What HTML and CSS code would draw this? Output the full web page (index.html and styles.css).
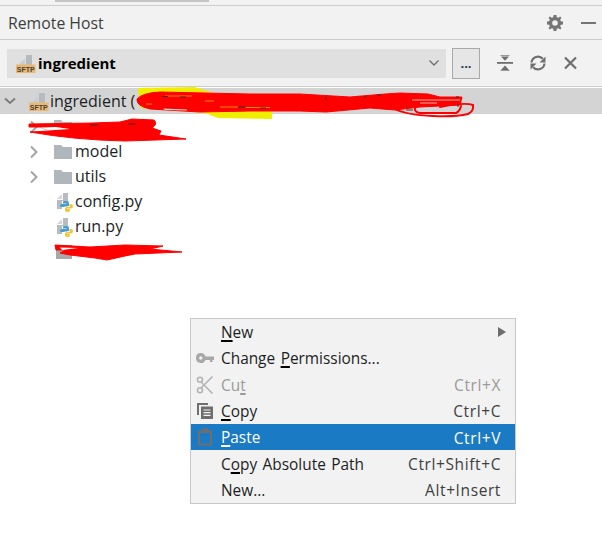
FILE: index.html
```html
<!DOCTYPE html>
<html lang="en">
<head>
<meta charset="utf-8">
<title>Remote Host</title>
<link rel="stylesheet" href="styles.css">
</head>
<body>
<svg width="0" height="0" class="defs">
  <defs>
    <symbol id="sftp" viewBox="0 0 20 20">
      <path d="M3 11 L9 5.500 V11Z" fill="#c9ced1"/>
      <path d="M10 2 H16 V12 H3 V11.500 H10Z" fill="#b4babe"/>
      <rect x="0" y="11.500" width="19.500" height="8.500" fill="#e9b974"/>
      <text x="9.750" y="18.700" class="sftp-text">SFTP</text>
    </symbol>
    <symbol id="folder" viewBox="0 0 18 14">
      <path d="M0 0 H7 L9 2 H18 V14 H0Z" fill="#afb6bc"/>
    </symbol>
    <symbol id="py" viewBox="0 0 18 20">
      <path d="M1 7 L6 2 V7Z" fill="#d3d7da"/>
      <path d="M7 1 H12 V9 H6 V17 H1 V8 H7Z" fill="#b6bcc0"/>
      <path d="M8 9 H11 Q13 9 13 11 V14 H8.500 V14.600 H11.500 V15 H6 Q4 15 4 13.500 Q4 12 6 12 H10.500 V11.500 H7 V10 Q7 9 8 9Z" fill="#4a9bd0"/>
      <path d="M13.500 12 H15 Q17 12 17 14 Q17 16.500 15 16.500 H11 V17 H14 V18.500 Q14 20 11.500 20 Q9 20 9 18.500 V16.500 Q9 15 11 15 H13.500Z" fill="#f2c83a"/>
    </symbol>
  </defs>
</svg>

<div class="strip"><span class="strip-tab"></span></div>

<header class="title-bar">
  <span class="title">Remote Host</span>
  <div class="title-actions">
    <svg class="icon-gear" viewBox="0 0 16 16" aria-hidden="true">
      <path fill-rule="evenodd" d="M6.600 0 H9.400 L9.800 2.200 L11.300 2.800 L13.200 1.600 L14.400 2.800 L13.200 4.700 L13.800 6.200 L16 6.600 V9.400 L13.800 9.800 L13.200 11.300 L14.400 13.200 L13.200 14.400 L11.300 13.200 L9.800 13.800 L9.400 16 H6.600 L6.200 13.800 L4.700 13.200 L2.800 14.400 L1.600 13.200 L2.800 11.300 L2.200 9.800 L0 9.400 V6.600 L2.200 6.200 L2.800 4.700 L1.600 2.800 L2.800 1.600 L4.700 2.800 L6.200 2.200 Z M8 5.200 A2.800 2.800 0 1 0 8 10.800 A2.800 2.800 0 1 0 8 5.200 Z" fill="#757575"/>
    </svg>
    <span class="minimize"></span>
  </div>
</header>

<div class="toolbar">
  <div class="combo">
    <svg class="combo-icon"><use href="#sftp"/></svg>
    <span class="combo-label">ingredient</span>
    <svg class="combo-arrow" viewBox="0 0 12 8" aria-hidden="true">
      <path d="M1.500 1.500 L6 6 L10.500 1.500" fill="none" stroke="#6e6e6e" stroke-width="1.300"/>
    </svg>
  </div>
  <button class="more" type="button">...</button>
  <div class="tools">
    <svg class="tool" viewBox="0 0 16 16" aria-hidden="true">
      <rect x="0" y="7" width="16" height="1.800" fill="#6e6e6e"/>
      <path d="M4 1.500 H12 L8 5.700Z M4 15 H12 L8 10.500Z" fill="#6e6e6e"/>
      <rect x="3.500" y="0" width="9" height="1" fill="#9a9a9a"/>
      <rect x="3.500" y="15" width="9" height="1" fill="#9a9a9a"/>
    </svg>
    <svg class="tool" viewBox="0 0 16 16" aria-hidden="true">
      <path d="M1.500 7.500 A6.500 6.500 0 0 1 12.800 3.800 M14.500 8.500 A6.500 6.500 0 0 1 3.200 12.200" fill="none" stroke="#6e6e6e" stroke-width="2.200"/>
      <path d="M15.500 1.500 V7.500 H9.500Z M0.500 14.500 V8.500 H6.500Z" fill="#6e6e6e"/>
    </svg>
    <svg class="tool" viewBox="0 0 16 16" aria-hidden="true">
      <path d="M2 2.500 L13 13.500 M13 2.500 L2 13.500" fill="none" stroke="#6e6e6e" stroke-width="2.200"/>
    </svg>
  </div>
</div>

<ul class="tree">
  <li class="row root">
    <svg class="chev" viewBox="0 0 12 12" aria-hidden="true"><path d="M1 3.500 L6 8 L11 3.500" fill="none" stroke="#7d7d7d" stroke-width="2"/></svg>
    <svg class="sftp-icon"><use href="#sftp"/></svg>
    <span class="name">ingredient (</span>
  </li>
  <li class="row child">
    <svg class="chev" viewBox="0 0 12 12" aria-hidden="true"><path d="M3 0.500 L8.500 6 L3 11.500" fill="none" stroke="#a3a3a3" stroke-width="2"/></svg>
    <svg class="folder-icon"><use href="#folder"/></svg>
  </li>
  <li class="row child">
    <svg class="chev" viewBox="0 0 12 12" aria-hidden="true"><path d="M3 0.500 L8.500 6 L3 11.500" fill="none" stroke="#a3a3a3" stroke-width="2"/></svg>
    <svg class="folder-icon"><use href="#folder"/></svg>
    <span class="name">model</span>
  </li>
  <li class="row child">
    <svg class="chev" viewBox="0 0 12 12" aria-hidden="true"><path d="M3 0.500 L8.500 6 L3 11.500" fill="none" stroke="#a3a3a3" stroke-width="2"/></svg>
    <svg class="folder-icon"><use href="#folder"/></svg>
    <span class="name">utils</span>
  </li>
  <li class="row child leaf">
    <svg class="py-icon"><use href="#py"/></svg>
    <span class="name">config.py</span>
  </li>
  <li class="row child leaf">
    <svg class="py-icon"><use href="#py"/></svg>
    <span class="name">run.py</span>
  </li>
  <li class="row child hidden-file">
    <span class="file-block"></span>
  </li>
</ul>

<svg class="scribble" viewBox="0 0 602 556" aria-hidden="true">
  <path d="M138 88 L195 87 L207 91 L222 95 L272 100 L272 119 L218 118 L205 113 L140 108Z" fill="#f0ee00"/>
  <path class="red" d="M137 99 Q142 93 160 92 L250 94 L300 94 L350 97 L385 94 L400 93 L428 94 L440 97 L462 97 L460 105 L420 107 L395 110 L370 108 L326 112 L300 111 L250 111 L200 112 L150 109 Q136 106 137 99Z"/>
  <path d="M163 108.500 L187 109.500 L187 110.500 L165 110Z" fill="#d8cfcf"/>
  <path class="red-line" d="M393 108 Q405 115 433 116 Q455 117 468 114 Q474 111 473 105 Q465 102 440 107"/>
  <path class="red-line" d="M415 108 Q414 112 420 113 L456 113 Q460 111 461 106"/>
  <path class="red-thin" d="M412 100 H440 M420 103 H437 M440 100 H460"/>
  <path class="ink" d="M326 97 V100 M365 96 V98 M377 95 H381 M406 110 H413 M456 97 H459 M458 107 V104"/>
  <path class="ember" d="M165 96 H192 M146 104 H152 M220 107 H238 M245 107.500 H270 M205 101 H214"/>
  <path class="ink" d="M162 96.500 H168 M180 97 H186 M238 107 H246 M260 108 H266"/>
  <path class="red" d="M29 124 L92 123 L120 122 L132 119 L154 120 Q158 124 152 128 L161 131 L159 135 L186 139 L125 141 Q75 140 30 132 L50 131 L40 127 L29 127Z"/>
  <path class="ink" d="M90 125 H98 M128 124 H136"/>
  <path d="M40 127.500 L56 127 L70 129 L48 130.500Z" fill="#fff"/>
  <path class="red" d="M55 245 L90 247 L125 245 L163 246 L150 249 L182 252 L135 254 L125 256 L107 260 L95 258 L70 255 L60 253 L66 250 L56 250Z"/>
  <path d="M60 247.500 L78 248 L62 250Z" fill="#fff"/>
</svg>

<div class="menu">
  <div class="item"><span class="slot"></span><span class="label"><u>N</u>ew</span><svg class="submenu" viewBox="0 0 8 10" aria-hidden="true"><path d="M0 0 L8 5 L0 10Z" fill="#6e6e6e"/></svg></div>
  <div class="item">
    <span class="slot"><svg class="mi" viewBox="0 0 18 18" aria-hidden="true"><path fill-rule="evenodd" d="M4.800 4 A5 5 0 0 1 9.500 7.500 H18 V11 H16.500 V13 H14 V11 H9.500 A5 5 0 1 1 4.800 4Z M4.800 7.300 A1.700 1.700 0 1 0 4.800 10.700 A1.700 1.700 0 1 0 4.800 7.300Z" fill="#a8a8a8"/></svg></span>
    <span class="label">Change <u>P</u>ermissions...</span>
  </div>
  <div class="item disabled">
    <span class="slot"><svg class="mi" viewBox="0 0 18 18" aria-hidden="true"><path d="M16.500 0.500 L5 12 M16.500 17.500 L5 6" stroke="#b5b5b5" stroke-width="1.600" fill="none"/><circle cx="4" cy="3.700" r="2.500" fill="none" stroke="#b5b5b5" stroke-width="1.600"/><circle cx="4" cy="14.300" r="2.500" fill="none" stroke="#b5b5b5" stroke-width="1.600"/></svg></span>
    <span class="label">Cu<u>t</u></span><span class="key">Ctrl+X</span>
  </div>
  <div class="item">
    <span class="slot"><svg class="mi" viewBox="0 0 18 18" aria-hidden="true"><path d="M1 1 H12 V3 H3 V13 H1Z" fill="#6e6e6e"/><rect x="5" y="4.500" width="12" height="12.500" fill="#6e6e6e"/><path d="M7.500 8 H14.500 M7.500 10.700 H14.500 M7.500 13.400 H14.500" stroke="#f2f2f2" stroke-width="1.200"/></svg></span>
    <span class="label"><u>C</u>opy</span><span class="key">Ctrl+C</span>
  </div>
  <div class="item active">
    <span class="slot"><svg class="mi" viewBox="0 0 18 18" aria-hidden="true"><path fill-rule="evenodd" d="M2 2.500 H6 V0.500 H12 V2.500 H16 V17.500 H2Z M4 5 V15.500 H14 V5Z" fill="#6e6e6e"/></svg></span>
    <span class="label"><u>P</u>aste</span><span class="key">Ctrl+V</span>
  </div>
  <div class="item"><span class="slot"></span><span class="label">C<u>o</u>py Absolute Path</span><span class="key">Ctrl+Shift+C</span></div>
  <div class="item"><span class="slot"></span><span class="label">New...</span><span class="key">Alt+Insert</span></div>
</div>
</body>
</html>
```
FILE: styles.css
```css
* { box-sizing: border-box; }
html, body { margin: 0; padding: 0; }
body {
  width: 602px;
  height: 556px;
  position: relative;
  overflow: hidden;
  background: #fff;
  font-family: "Open Sans", "Noto Sans", sans-serif;
  font-size: 15px;
  color: #1b1f24;
}
.defs { position: absolute; }
.sftp-text { font-family: "Liberation Sans", sans-serif; font-size: 7px; font-weight: 700; fill: #4a4036; text-anchor: middle; }

.strip { height: 6px; background: #f2f2f2; border-bottom: 1px solid #cdcdcd; padding-left: 55px; }
.strip-tab { display: block; width: 154px; height: 2px; background: #c4c4c4; }

.title-bar {
  height: 34px;
  background: #f2f2f2;
  border-bottom: 1px solid #cdcdcd;
  display: flex;
  align-items: center;
  justify-content: space-between;
  padding: 0 6px 0 8px;
}
.title { font-size: 15.8px; color: #3c3f41; }
.title-actions { display: flex; align-items: center; gap: 18px; }
.icon-gear { width: 16px; height: 16px; flex: none; }
.minimize { display: block; flex: none; width: 15px; height: 2px; background: #757575; }

.toolbar {
  height: 47px;
  background: #f2f2f2;
  border-bottom: 1px solid #cdcdcd;
  display: flex;
  align-items: center;
  padding: 0 0 0 7px;
}
.combo {
  width: 439px;
  height: 29px;
  background: #e0e0e0;
  display: flex;
  align-items: center;
  padding: 0 6px 0 9px;
}
.combo-icon { width: 20px; height: 20px; margin-right: 2px; }
.combo-label { flex: 1; font-weight: 700; color: #000; font-size: 15px; }
.combo-arrow { width: 12px; height: 8px; }
.more {
  width: 28px;
  height: 31px;
  margin-left: 6px;
  border: 1px solid #a9a9a9;
  background: #e6e6e6;
  padding: 0;
  font: 700 13px "Open Sans", sans-serif;
  color: #1a3a5a;
}
.tools { display: flex; align-items: center; gap: 17px; margin-left: 17px; }
.tool { width: 16px; height: 16px; }

.tree { list-style: none; margin: 1px 0 0; padding: 0; }
.row { display: flex; align-items: center; height: 25px; }
.name { font-size: 16px; padding-bottom: 2px; }
.root { height: 26px; background: #d4d4d4; padding-left: 4px; }
.root .name { padding-bottom: 0; }
.root .chev { margin-right: 13px; }
.sftp-icon { width: 20px; height: 20px; margin-right: 1px; }
.child { padding-left: 28px; }
.chev { width: 12px; height: 12px; flex: none; }
.child .chev { margin-right: 14px; }
.folder-icon { width: 18px; height: 14px; margin-right: 3px; }
.leaf { padding-left: 56px; }
.py-icon { width: 18px; height: 20px; margin-right: 1px; }
.hidden-file { padding-left: 56px; }
.file-block { display: block; width: 16px; height: 14px; background: #a8a8a8; }

.scribble { position: absolute; left: 0; top: 0; width: 602px; height: 556px; pointer-events: none; }
.red { fill: #fe0000; stroke: #fe0000; stroke-width: 1; stroke-linejoin: round; }
.red-line { fill: none; stroke: #fe0000; stroke-width: 2; stroke-linecap: round; }
.red-thin { fill: none; stroke: #f8b0a8; stroke-width: 1; }
.ink { fill: none; stroke: #4a2a20; stroke-width: 1; }
.ember { fill: none; stroke: #f08a00; stroke-width: 1; }

.menu {
  position: absolute;
  left: 190px;
  top: 318px;
  width: 326px;
  height: 186px;
  background: #f2f2f2;
  border: 1px solid #c8c8c8;
  display: flex;
  flex-direction: column;
}
.item {
  display: flex;
  align-items: center;
  height: 26.3px;
  padding-right: 14px;
}
.slot { width: 30px; flex: none; display: flex; align-items: center; padding-left: 5px; }
.mi { width: 18px; height: 18px; }
.label { flex: 1; font-size: 15.4px; word-spacing: 1.5px; padding-top: 1px; }
.label u { text-decoration-thickness: 2px; text-underline-offset: 2px; text-decoration-color: #000; }
.key { color: #3c3f41; font-size: 15.5px; letter-spacing: 0.6px; padding-top: 1px; }
.submenu { width: 8px; height: 10px; margin-right: -5px; }
.disabled .label, .disabled .key { color: #9a9a9a; }
.disabled u { text-decoration-color: #9a9a9a; }
.active { background: #1a7ac4; color: #fff; }
.active .key { color: #fff; }
.active u { text-decoration-color: #fff; }
```
